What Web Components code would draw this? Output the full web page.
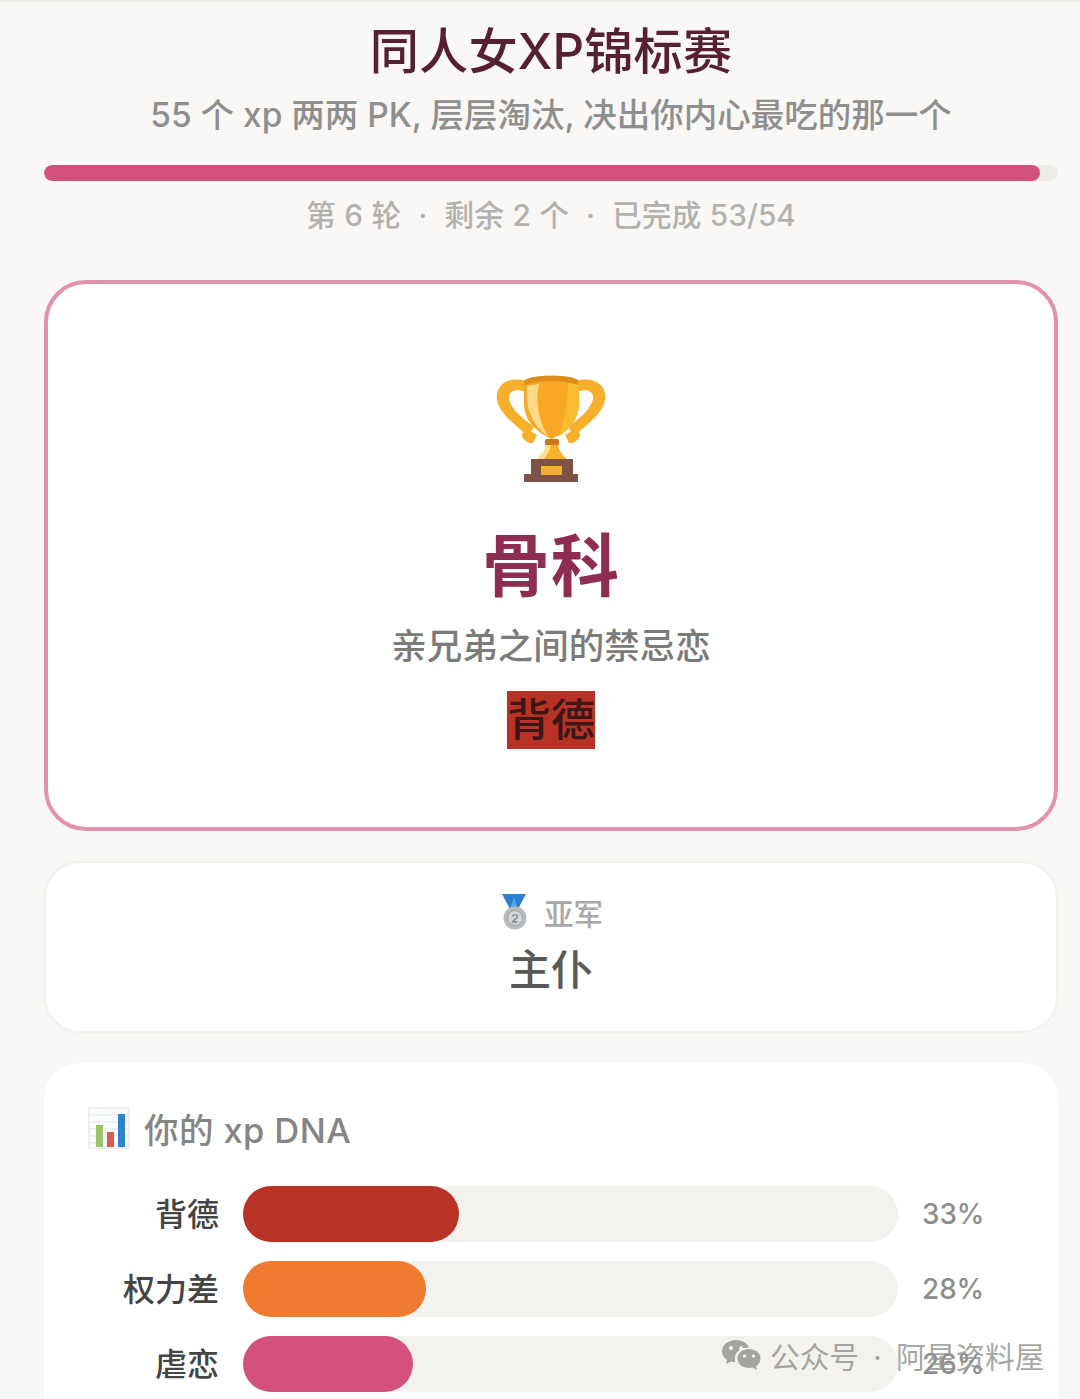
<!DOCTYPE html>
<html lang="zh-CN"><head><meta charset="utf-8"><title>同人女XP锦标赛</title>
<style>
html,body{margin:0;height:1399px;overflow:hidden;background:#faf8f6;}
body{font-family:"Inter","Noto Sans CJK SC",sans-serif;position:relative;}
</style></head><body>
<xp-app>
  <xp-header title-text="同人女XP锦标赛" sub="55 个 xp 两两 PK, 层层淘汰, 决出你内心最吃的那一个" pct="98.2"></xp-header>
  <xp-champion name="骨科" desc="亲兄弟之间的禁忌恋" tag="背德"></xp-champion>
  <xp-runner name="主仆" label="亚军"></xp-runner>
  <xp-dna>
    <xp-bar label="背德" pct="33" fill="#b83226" w="216"></xp-bar>
    <xp-bar label="权力差" pct="28" fill="#ee7b30" w="183"></xp-bar>
    <xp-bar label="虐恋" pct="26" fill="#d4517f" w="170"></xp-bar>
  </xp-dna>
</xp-app>
<xp-watermark></xp-watermark>
<script>
function def(name, css, html){
  customElements.define(name, class extends HTMLElement{
    connectedCallback(){
      const a=k=>this.getAttribute(k)||'';
      const r=this.shadowRoot||this.attachShadow({mode:'open'});
      r.innerHTML='<style>'+css+'</style>'+html(a);
    }
  });
}
def('xp-app',`:host{display:flex;flex-direction:column;box-sizing:border-box;height:1399px;padding:0 22px 0 44px;border-left:1px solid #efedea;border-top:2px solid #efedea;margin-left:-1px;overflow:hidden}`,()=>`<slot></slot>`);
def('xp-header',`:host{display:block;flex:none;text-align:center}
h1{margin:0;padding-top:13px;font-size:49.200px;line-height:72px;font-weight:500;color:#571f33;letter-spacing:.2px}
p{margin:0;padding-top:3px;font-size:33.500px;line-height:50px;font-weight:500;color:#8f8f8d}
.t{height:16px;border-radius:8px;background:#efedea;margin-top:25px;overflow:hidden}
.f{height:100%;border-radius:8px;background:#d4517f}
.s{margin-top:12px;font-size:29.800px;line-height:44px;font-weight:500;color:#b2b1ae;word-spacing:.5px}
.d{display:inline-block;width:43px;text-align:center}`,a=>`
<h1>${a('title-text')}</h1><p>${a('sub')}</p>
<div class="t"><div class="f" style="width:${a('pct')}%"></div></div>
<div class="s">第 6 轮<span class="d">·</span>剩余 2 个<span class="d">·</span>已完成 53/54</div>`);
def('xp-champion',`:host{display:flex;flex:none;flex-direction:column;align-items:center;box-sizing:border-box;height:551px;margin-top:43px;border:4px solid #e391b1;border-radius:42px;background:#fff;padding-top:90px}
svg{display:block;width:110px;height:110px}
.n{margin-top:37px;font-size:68px;line-height:90px;font-weight:700;color:#8e2c52;letter-spacing:1px}
.d{margin-top:9px;font-size:35.500px;line-height:54px;font-weight:500;color:#7b7b79}
.g{margin-top:17px;background:#b83226;color:#3b1718;font-size:44px;line-height:58px;font-weight:500;height:58px;width:88px;text-align:center}`,a=>`
<svg viewBox="0 0 110 110">
 <path d="M29 7C12 2-1 11 1 26c2 13 18 25 31 36l6-9C26 44 15 35 13 25 12 17 20 14 29 18zM81 7c17-5 30 4 28 19-2 13-18 25-31 36l-6-9c12-9 23-18 25-28 1-8-7-11-16-7z" fill="#f6b02c"/>
 <path d="M26 59l7-3 8 5-4 8c-5 1-12-4-11-10zM84 59l-7-3-8 5 4 8c5 1 12-4 11-10z" fill="#f6b02c"/>
 <path d="M28 7C34 0 77 0 83 7v22c0 17-11 28-27.500 36C39 57 28 46 28 29z" fill="#f9a825"/>
 <path d="M28 7C34 0 77 0 83 7l-1 4C70 6 41 6 29 11z" fill="#dd8f1a"/>
 <path d="M31 12l12-2c-3 14-2 34 9 52C37 52 29 35 31 12z" fill="#ffd98a"/>
 <path d="M72 9l11 2v18c0 15-9 27-21 34 6-15 10-32 10-54z" fill="#fbbd2f"/>
 <rect x="49" y="65" width="14" height="7" rx="2" fill="#c9761b"/>
 <path d="M50 71h12c1 6 5 11 10 15H40c5-4 9-9 10-15z" fill="#f8b324"/>
 <path d="M50 71h5c-1 6-4 11-8 15h-7c5-4 9-9 10-15z" fill="#ffdd90"/>
 <path d="M35 85h42v15h5v8H28v-8h7z" fill="#7d5349"/>
 <rect x="45" y="92" width="21" height="9" fill="#f5b125"/>
</svg>
<div class="n">${a('name')}</div><div class="d">${a('desc')}</div><div class="g">${a('tag')}</div>`);
def('xp-runner',`:host{display:flex;flex:none;flex-direction:column;align-items:center;box-sizing:border-box;height:172px;margin-top:30px;border:2px solid #f3f1ed;border-radius:36px;background:#fff;padding-top:29px}
.l{display:flex;align-items:center;gap:15px;height:40px;font-size:29.500px;font-weight:500;color:#a8a8a6}
svg{width:30px;height:36px;display:block}
.n{margin-top:8px;font-size:42px;line-height:60px;font-weight:500;color:#595957}`,a=>`
<div class="l"><svg viewBox="0 0 30 36"><path d="M3 0h24l-8 15h-8z" fill="#2f7fd0"/><path d="M15 3l4 12h-8z" fill="#5aa5e8"/><circle cx="16" cy="24" r="11.500" fill="#b9bcbe"/><circle cx="16" cy="24" r="7.500" fill="#d3d5d6" stroke="#9a9ea0"/><path d="M13.500 22.500c.5-2.500 5-2.500 5 0 0 2-4 3-5 5.500h5" fill="none" stroke="#85898b" stroke-width="1.400"/></svg><span>${a('label')}</span></div>
<div class="n">${a('name')}</div>`);
def('xp-dna',`:host{display:block;flex:none;box-sizing:border-box;margin-top:30px;height:420px;border-radius:36px 36px 0 0;background:#fff;padding:37px 44px 0 44px}
.h{display:flex;align-items:center;gap:14px;height:56px;font-size:34.500px;font-weight:500;color:#858583;letter-spacing:.4px}
svg{width:42px;height:42px;display:block}
.r{display:flex;flex-direction:column;gap:19px;margin-top:30px}`,()=>`
<div class="h"><svg viewBox="0 0 42 42"><rect x="1" y="1" width="40" height="40" fill="#fbfcfc" stroke="#dde1e2"/><path d="M2 8h38M2 15h38M2 22h38M2 29h38M2 36h38" stroke="#dfe7ee" stroke-width="1"/><rect x="8" y="18" width="7" height="22" fill="#9cc46b"/><rect x="19" y="25" width="7" height="15" fill="#dc5a52"/><rect x="30" y="7" width="7" height="33" fill="#2f83cc"/></svg><span>你的 xp DNA</span></div>
<div class="r"><slot></slot></div>`);
def('xp-bar',`:host{display:grid;grid-template-columns:130px 655px auto;column-gap:24px;align-items:center;height:56px;margin-left:1px;white-space:nowrap}
.l{text-align:right;font-size:32px;font-weight:500;color:#444;margin-bottom:5px}
.t{height:56px;border-radius:28px;background:#f4f2ee}
.f{height:100%;border-radius:28px}
.p{font-size:27.800px;font-weight:500;color:#8d8d8b}`,a=>`
<div class="l">${a('label')}</div><div class="t"><div class="f" style="width:${a('w')}px;background:${a('fill')}"></div></div><div class="p">${a('pct')}%</div>`);
def('xp-watermark',`:host{position:absolute;left:721px;top:1335px;display:flex;align-items:center;gap:9px;height:40px;font-size:29.700px;color:rgba(150,150,148,.85);white-space:nowrap}
svg{width:40px;height:32px;display:block}
.d{display:inline-block;width:37px;text-align:center;font-family:"Inter",sans-serif}`,()=>`
<svg viewBox="0 0 40 32"><path d="M15 1C7 1 1 6 1 12.500c0 3.500 2 6.500 5 8.500l-1 4 5-2.500c1.500.5 3 .7 4.500.7-.5-1-.7-2.200-.7-3.400C13.800 13 20 8 28 8.500 26.500 4 21 1 15 1z" fill="#a3a3a1"/><path d="M39.500 19.500C39.500 13.800 34 10 28 10s-11.500 3.800-11.500 9.500S22 29 28 29c1.300 0 2.500-.2 3.700-.5L36 31l-1-3.700c2.700-1.800 4.500-4.600 4.500-7.800z" fill="#a3a3a1"/><circle cx="10" cy="9" r="2" fill="#fff"/><circle cx="20" cy="9" r="2" fill="#fff"/><circle cx="23.500" cy="17" r="1.600" fill="#fff"/><circle cx="32.500" cy="17" r="1.600" fill="#fff"/></svg><span>公众号<span class="d">·</span>阿星资料屋</span>`);
</script>
</body></html>
